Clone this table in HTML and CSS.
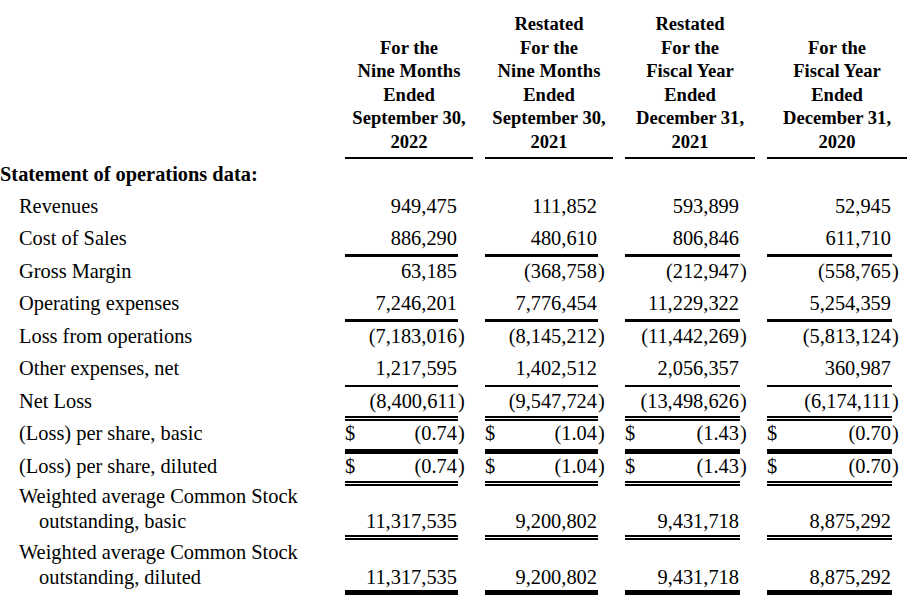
FILE: index.html
```html
<!DOCTYPE html>
<html>
<head>
<meta charset="utf-8">
<link rel="stylesheet" href="styles.css">
</head>
<body>
<div class="fin">
  <div class="row head">
    <div class="lbl"></div>
    <div class="hcol">For the<br>Nine Months<br>Ended<br>September 30,<br>2022</div>
    <div class="hcol">Restated<br>For the<br>Nine Months<br>Ended<br>September 30,<br>2021</div>
    <div class="hcol">Restated<br>For the<br>Fiscal Year<br>Ended<br>December 31,<br>2021</div>
    <div class="hcol">For the<br>Fiscal Year<br>Ended<br>December 31,<br>2020</div>
  </div>

  <div class="row section">
    <div class="sec">Statement of operations data:</div>
  </div>

  <div class="row">
    <div class="lbl">Revenues</div>
    <div class="val"><div class="num"><span>949,475</span></div><div class="par"></div></div>
    <div class="val"><div class="num"><span>111,852</span></div><div class="par"></div></div>
    <div class="val"><div class="num"><span>593,899</span></div><div class="par"></div></div>
    <div class="val"><div class="num"><span>52,945</span></div><div class="par"></div></div>
  </div>

  <div class="row">
    <div class="lbl">Cost of Sales</div>
    <div class="val"><div class="num b3"><span>886,290</span></div><div class="par"></div></div>
    <div class="val"><div class="num b3"><span>480,610</span></div><div class="par"></div></div>
    <div class="val"><div class="num b3"><span>806,846</span></div><div class="par"></div></div>
    <div class="val"><div class="num b3"><span>611,710</span></div><div class="par"></div></div>
  </div>

  <div class="row">
    <div class="lbl">Gross Margin</div>
    <div class="val"><div class="num"><span>63,185</span></div><div class="par"></div></div>
    <div class="val"><div class="num"><span>(368,758</span></div><div class="par">)</div></div>
    <div class="val"><div class="num"><span>(212,947</span></div><div class="par">)</div></div>
    <div class="val"><div class="num"><span>(558,765</span></div><div class="par">)</div></div>
  </div>

  <div class="row">
    <div class="lbl">Operating expenses</div>
    <div class="val"><div class="num b3"><span>7,246,201</span></div><div class="par"></div></div>
    <div class="val"><div class="num b3"><span>7,776,454</span></div><div class="par"></div></div>
    <div class="val"><div class="num b3"><span>11,229,322</span></div><div class="par"></div></div>
    <div class="val"><div class="num b3"><span>5,254,359</span></div><div class="par"></div></div>
  </div>

  <div class="row">
    <div class="lbl">Loss from operations</div>
    <div class="val"><div class="num"><span>(7,183,016</span></div><div class="par">)</div></div>
    <div class="val"><div class="num"><span>(8,145,212</span></div><div class="par">)</div></div>
    <div class="val"><div class="num"><span>(11,442,269</span></div><div class="par">)</div></div>
    <div class="val"><div class="num"><span>(5,813,124</span></div><div class="par">)</div></div>
  </div>

  <div class="row">
    <div class="lbl">Other expenses, net</div>
    <div class="val"><div class="num b2"><span>1,217,595</span></div><div class="par"></div></div>
    <div class="val"><div class="num b2"><span>1,402,512</span></div><div class="par"></div></div>
    <div class="val"><div class="num b2"><span>2,056,357</span></div><div class="par"></div></div>
    <div class="val"><div class="num b2"><span>360,987</span></div><div class="par"></div></div>
  </div>

  <div class="row">
    <div class="lbl">Net Loss</div>
    <div class="val"><div class="num dbl"><span>(8,400,611</span></div><div class="par">)</div></div>
    <div class="val"><div class="num dbl"><span>(9,547,724</span></div><div class="par">)</div></div>
    <div class="val"><div class="num dbl"><span>(13,498,626</span></div><div class="par">)</div></div>
    <div class="val"><div class="num dbl"><span>(6,174,111</span></div><div class="par">)</div></div>
  </div>

  <div class="row">
    <div class="lbl">(Loss) per share, basic</div>
    <div class="val"><div class="num thick"><span class="cur">$</span><span>(0.74</span></div><div class="par">)</div></div>
    <div class="val"><div class="num thick"><span class="cur">$</span><span>(1.04</span></div><div class="par">)</div></div>
    <div class="val"><div class="num thick"><span class="cur">$</span><span>(1.43</span></div><div class="par">)</div></div>
    <div class="val"><div class="num thick"><span class="cur">$</span><span>(0.70</span></div><div class="par">)</div></div>
  </div>

  <div class="row">
    <div class="lbl">(Loss) per share, diluted</div>
    <div class="val"><div class="num dbl"><span class="cur">$</span><span>(0.74</span></div><div class="par">)</div></div>
    <div class="val"><div class="num dbl"><span class="cur">$</span><span>(1.04</span></div><div class="par">)</div></div>
    <div class="val"><div class="num dbl"><span class="cur">$</span><span>(1.43</span></div><div class="par">)</div></div>
    <div class="val"><div class="num dbl"><span class="cur">$</span><span>(0.70</span></div><div class="par">)</div></div>
  </div>

  <div class="row tall">
    <div class="lbl wrap">Weighted average Common Stock<br>outstanding, basic</div>
    <div class="val"><div class="num dbl"><span>11,317,535</span></div><div class="par"></div></div>
    <div class="val"><div class="num dbl"><span>9,200,802</span></div><div class="par"></div></div>
    <div class="val"><div class="num dbl"><span>9,431,718</span></div><div class="par"></div></div>
    <div class="val"><div class="num dbl"><span>8,875,292</span></div><div class="par"></div></div>
  </div>

  <div class="row tall last">
    <div class="lbl wrap">Weighted average Common Stock<br>outstanding, diluted</div>
    <div class="val"><div class="num thick6"><span>11,317,535</span></div><div class="par"></div></div>
    <div class="val"><div class="num thick6"><span>9,200,802</span></div><div class="par"></div></div>
    <div class="val"><div class="num thick6"><span>9,431,718</span></div><div class="par"></div></div>
    <div class="val"><div class="num thick6"><span>8,875,292</span></div><div class="par"></div></div>
  </div>
</div>
</body>
</html>
```

FILE: styles.css
```css
html, body {
  margin: 0;
  padding: 0;
  background: #ffffff;
}

body {
  font-family: "Liberation Serif", "Times New Roman", serif;
  color: #000000;
  font-size: 20.4px;
}

.fin {
  width: 909px;
}

.row {
  display: grid;
  grid-template-columns: 333px 128px 128px 130px 140px;
  column-gap: 12px;
  height: 32.5px;
}

.row.head {
  height: auto;
  padding-top: 12px;
  align-items: end;
}

.hcol {
  font-weight: bold;
  font-size: 18.6px;
  line-height: 23.6px;
  text-align: center;
  padding-bottom: 3px;
  border-bottom: 2px solid #000;
}

.row.section {
  height: 33px;
  display: block;
}

.sec {
  font-weight: bold;
  line-height: 30px;
  white-space: nowrap;
}

.lbl {
  padding-left: 19px;
  line-height: 29.5px;
  white-space: nowrap;
}

.lbl.wrap {
  line-height: 25px;
  padding-left: 39px;
  text-indent: -20px;
}

.val {
  display: grid;
  grid-template-columns: 1fr 15px;
  height: 100%;
}

.num {
  box-sizing: border-box;
  height: 100%;
  display: flex;
  align-items: flex-start;
  justify-content: flex-end;
  line-height: 29.5px;
  padding-right: 1px;
}

.num .cur {
  margin-right: auto;
}

.par {
  line-height: 29.5px;
}

.row.tall {
  height: 55.5px;
}

.row.tall.last {
  height: 55px;
}

.row.tall .num {
  padding-top: 25px;
  line-height: 25px;
}

.b3 { border-bottom: 3px solid #000; }
.b2 { border-bottom: 2px solid #000; }
.dbl { border-bottom: 5px double #000; }
.thick { border-bottom: 5px solid #000; }
.thick6 { border-bottom: 6px solid #000; }
```
